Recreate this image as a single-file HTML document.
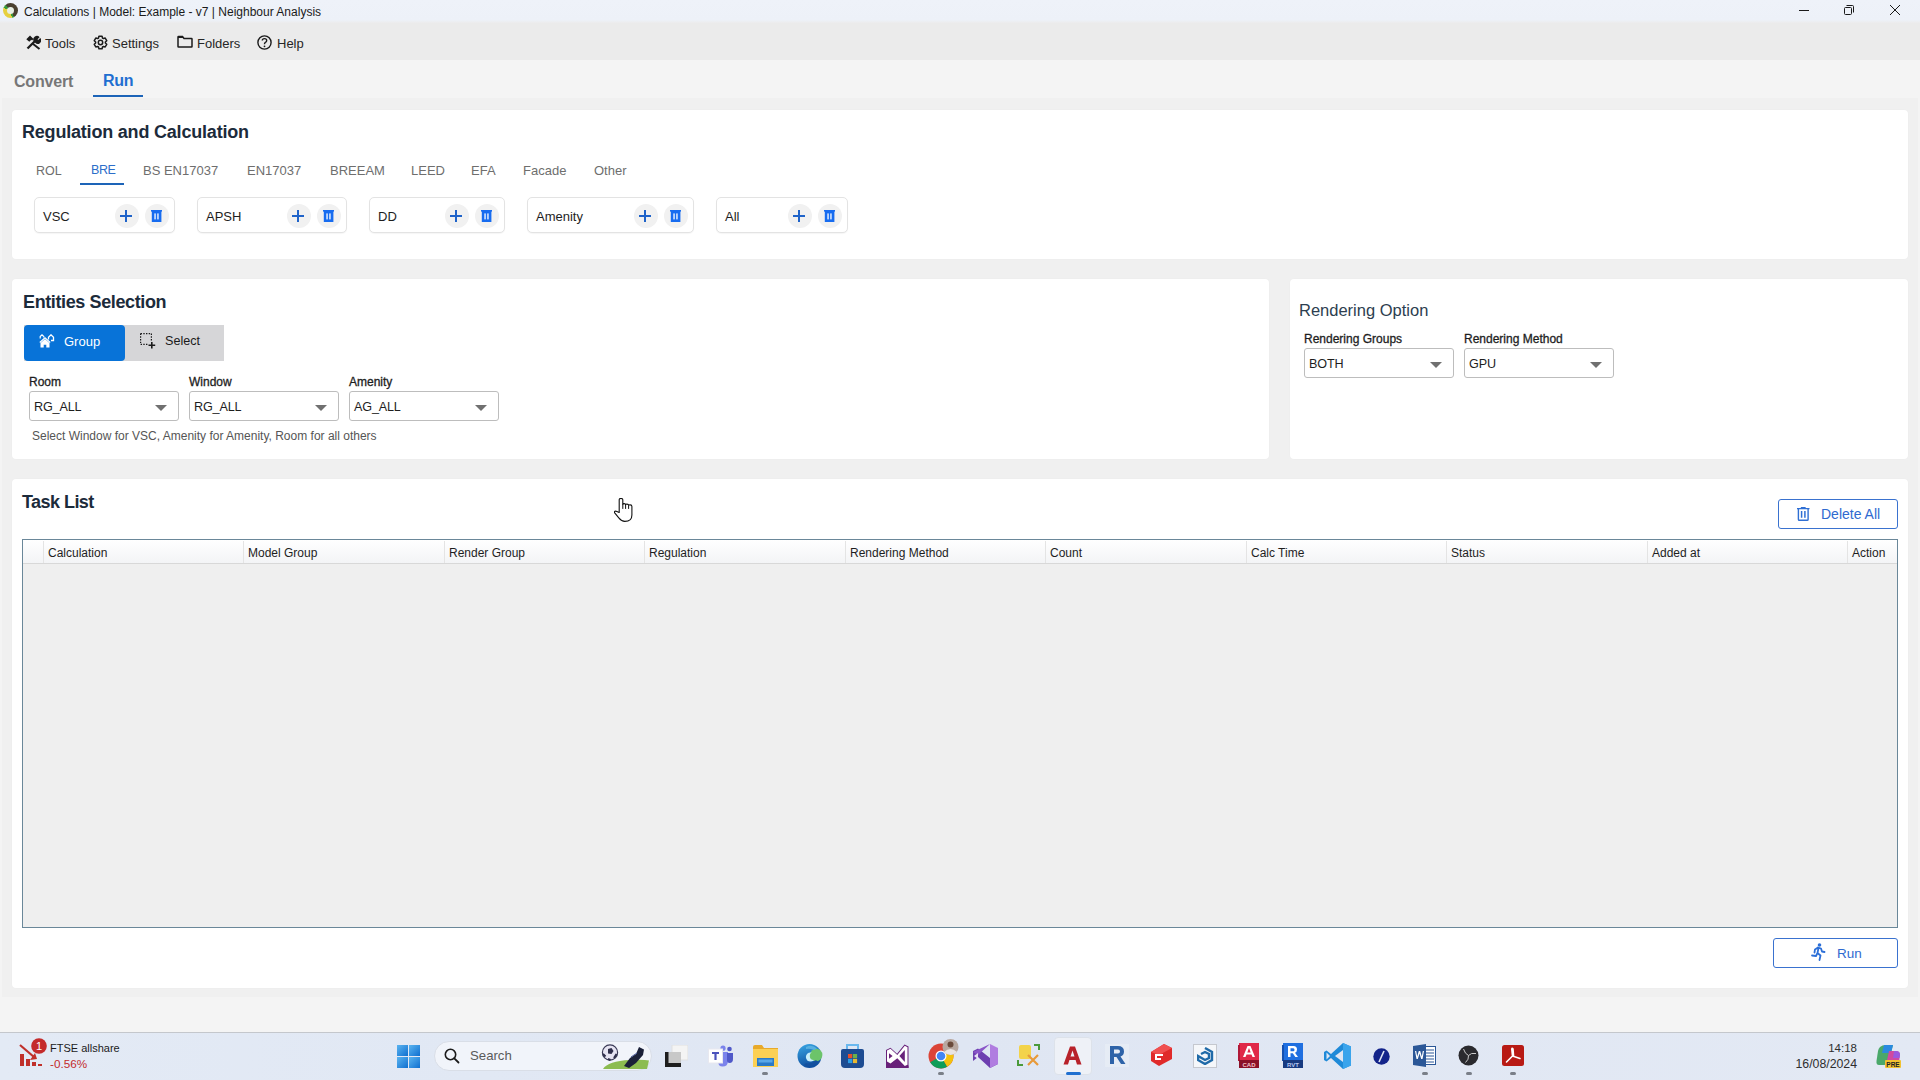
<!DOCTYPE html>
<html><head><meta charset="utf-8">
<style>
*{box-sizing:border-box;margin:0;padding:0}
html,body{width:1920px;height:1080px;overflow:hidden;background:#f4f4f4;font-family:"Liberation Sans",sans-serif;color:#1b1b1b}
.a{position:absolute}
.t{position:absolute;white-space:nowrap;line-height:1}
#title{left:0;top:0;width:1920px;height:23px;background:linear-gradient(#eef2f9 0,#edf1f8 20px,#ececec 23px)}
#menu{left:0;top:23px;width:1920px;height:37px;background:#ebebeb}
.card{position:absolute;background:#fff;border-radius:4px;box-shadow:0 0 2px rgba(0,0,0,0.03)}
.chip{position:absolute;top:197px;height:36px;border:1px solid #e3e3e3;border-radius:5px;background:#fff;box-shadow:0 1px 1px rgba(0,0,0,0.04)}
.chip .lbl{position:absolute;left:8px;top:12px;font-size:13px;color:#1e1e1e;line-height:1}
.cb{position:absolute;top:6px;width:24px;height:24px;border-radius:12px;background:#f1f1f1}
.dd{position:absolute;height:30px;border:1px solid #bdbdbd;border-radius:3px;background:#fff}
.dd .v{position:absolute;left:4px;top:9px;font-size:12.6px;letter-spacing:-0.15px;line-height:1;color:#1e1e1e}
.dd .ar{position:absolute;right:11px;top:13px;width:0;height:0;border-left:6px solid transparent;border-right:6px solid transparent;border-top:6px solid #707070}
.flbl{position:absolute;font-size:12px;line-height:1;color:#1e1e1e;-webkit-text-stroke:0.3px #1e1e1e}
.th{position:absolute;top:547px;font-size:12px;line-height:1;color:#1e1e1e}
.sep{position:absolute;top:541px;width:1px;height:22px;background:#e4e4e4}
</style></head><body>
<div id="title" class="a">
  <div class="a" style="left:2.5px;top:3.3px;width:15px;height:15px;border-radius:50%;background:conic-gradient(from -40deg,#4a4030 0deg 190deg,#3a9a3a 190deg 210deg,#e6d040 210deg 330deg,#3a9a3a 330deg 360deg)"></div><div class="a" style="left:6.5px;top:7.3px;width:7px;height:7px;border-radius:50%;background:#e8efe4"></div>
  <div class="t" style="left:24px;top:6px;font-size:12px;color:#1a1a1a">Calculations | Model: Example - v7 | Neighbour Analysis</div>
  <svg class="a" style="left:1798px;top:5px" width="12" height="12" viewBox="0 0 12 12"><path d="M1 5.5H11" stroke="#1a1a1a" stroke-width="1"/></svg>
  <svg class="a" style="left:1843px;top:4px" width="12" height="12" viewBox="0 0 12 12"><rect x="1.5" y="3.5" width="7" height="7" rx="1" fill="none" stroke="#1a1a1a" stroke-width="1"/><path d="M3.5 1.5H9.5Q10.5 1.5 10.5 2.5V8.5" fill="none" stroke="#1a1a1a" stroke-width="1"/></svg>
  <svg class="a" style="left:1889px;top:4px" width="12" height="12" viewBox="0 0 12 12"><path d="M1 1L11 11M11 1L1 11" stroke="#1a1a1a" stroke-width="1"/></svg>
</div>
<div id="menu" class="a">
  <svg class="a" style="left:26px;top:12px" width="15" height="15" viewBox="0 0 15 15"><path d="M1.5 13.5L9 6" stroke="#1b1b1b" stroke-width="2.3"/><path d="M8.2 6.8A3.2 3.2 0 0 1 13.6 2.2L11.5 4.2L12.2 5L14.2 3A3.2 3.2 0 0 1 9.2 7.8Z" fill="#1b1b1b"/><path d="M6.5 8.5L13.5 14" stroke="#1b1b1b" stroke-width="2"/><path d="M0.3 4.2L4 0.5L7.5 4L6 5.5L5.3 4.8L3.3 6.8Z" fill="#1b1b1b"/></svg>
  <div class="t" style="left:45px;top:14px;font-size:13px;color:#262626">Tools</div>
  <svg class="a" style="left:93px;top:12px" width="15" height="15" viewBox="0 0 15 15"><path fill="none" stroke="#1b1b1b" stroke-width="1.5" stroke-linejoin="round" d="M5.50 3.03 L5.95 1.19 L9.05 1.19 L9.50 3.03 L10.38 3.53 L12.20 3.01 L13.74 5.68 L12.37 6.99 L12.37 8.01 L13.74 9.32 L12.20 11.99 L10.38 11.47 L9.50 11.97 L9.05 13.81 L5.95 13.81 L5.50 11.97 L4.62 11.47 L2.80 11.99 L1.26 9.32 L2.63 8.01 L2.63 6.99 L1.26 5.68 L2.80 3.01 L4.62 3.53Z"/><circle cx="7.5" cy="7.5" r="2.2" fill="none" stroke="#1b1b1b" stroke-width="1.5"/></svg>
  <div class="t" style="left:112px;top:14px;font-size:13px;color:#262626">Settings</div>
  <svg class="a" style="left:177px;top:12px" width="16" height="13" viewBox="0 0 16 13"><path d="M1 2V11.5Q1 12 1.5 12H14.5Q15 12 15 11.5V4Q15 3.5 14.5 3.5H7L5.5 1.5H1.5Q1 1.5 1 2Z" fill="none" stroke="#1b1b1b" stroke-width="1.5"/><path d="M1 1.5H5.5L6.5 3H1Z" fill="#1b1b1b"/></svg>
  <div class="t" style="left:197px;top:14px;font-size:13px;color:#262626">Folders</div>
  <svg class="a" style="left:257px;top:12px" width="15" height="15" viewBox="0 0 15 15"><circle cx="7.5" cy="7.5" r="6.6" fill="none" stroke="#1b1b1b" stroke-width="1.4"/><path d="M5.3 5.6Q5.3 3.6 7.5 3.6Q9.7 3.6 9.7 5.5Q9.7 6.7 8.4 7.3Q7.5 7.8 7.5 9V9.3" fill="none" stroke="#1b1b1b" stroke-width="1.4"/><circle cx="7.5" cy="11.3" r="0.9" fill="#1b1b1b"/></svg>
  <div class="t" style="left:277px;top:14px;font-size:13px;color:#262626">Help</div>
</div>
<div class="t" style="left:14px;top:74px;font-size:16px;letter-spacing:-0.2px;font-weight:700;color:#777">Convert</div>
<div class="t" style="left:103px;top:73px;font-size:16px;letter-spacing:-0.3px;font-weight:700;color:#1f6fd1">Run</div>
<div class="a" style="left:93px;top:95px;width:50px;height:2px;background:#1d64b8"></div>

<div class="a" style="left:2px;top:98px;width:1916px;height:899px;background:#f0f0f0"></div>
<!-- Card 1 -->
<div class="card" style="left:12px;top:110px;width:1896px;height:149px"></div>
<div class="t" style="left:22px;top:122.7px;font-size:18px;letter-spacing:-0.2px;font-weight:700;color:#1c2b3b">Regulation and Calculation</div>
<div class="t" style="left:36px;top:164.8px;font-size:12.5px;color:#6e6e6e">ROL</div>
<div class="t" style="left:91px;top:164px;font-size:12.5px;letter-spacing:-0.4px;color:#2c6ec9">BRE</div>
<div class="a" style="left:80px;top:183px;width:44px;height:2px;background:#1d64b8"></div>
<div class="t" style="left:143px;top:164px;font-size:13px;color:#6e6e6e">BS EN17037</div>
<div class="t" style="left:247px;top:164px;font-size:13px;color:#6e6e6e">EN17037</div>
<div class="t" style="left:330px;top:164px;font-size:13px;color:#6e6e6e">BREEAM</div>
<div class="t" style="left:411px;top:164px;font-size:13px;color:#6e6e6e">LEED</div>
<div class="t" style="left:471px;top:164px;font-size:13px;color:#6e6e6e">EFA</div>
<div class="t" style="left:523px;top:164px;font-size:13px;color:#6e6e6e">Facade</div>
<div class="t" style="left:594px;top:164px;font-size:13px;color:#6e6e6e">Other</div>
<div class="chip" style="left:34px;width:141px">
<div class="lbl">VSC</div>
<div class="cb" style="left:79.5px"></div><div class="cb" style="left:109.5px"></div>
<svg class="a" style="left:84.5px;top:12px" width="12" height="12" viewBox="0 0 12 12"><path d="M0 6H12M6 0V12" stroke="#1f63c9" stroke-width="2"/></svg>
<svg class="a" style="left:116.0px;top:12px" width="11" height="13" viewBox="0 0 11 13"><rect x="0" y="0" width="11" height="1.6" fill="#176cf0"/><rect x="0.8" y="1" width="9.6" height="11" fill="#176cf0"/><rect x="3.4" y="3.4" width="1.3" height="6" fill="#fff"/><rect x="6.3" y="3.4" width="1.3" height="6" fill="#fff"/></svg>
</div><div class="chip" style="left:197px;width:150px">
<div class="lbl">APSH</div>
<div class="cb" style="left:88.5px"></div><div class="cb" style="left:118.5px"></div>
<svg class="a" style="left:93.5px;top:12px" width="12" height="12" viewBox="0 0 12 12"><path d="M0 6H12M6 0V12" stroke="#1f63c9" stroke-width="2"/></svg>
<svg class="a" style="left:125.0px;top:12px" width="11" height="13" viewBox="0 0 11 13"><rect x="0" y="0" width="11" height="1.6" fill="#176cf0"/><rect x="0.8" y="1" width="9.6" height="11" fill="#176cf0"/><rect x="3.4" y="3.4" width="1.3" height="6" fill="#fff"/><rect x="6.3" y="3.4" width="1.3" height="6" fill="#fff"/></svg>
</div><div class="chip" style="left:369px;width:136px">
<div class="lbl">DD</div>
<div class="cb" style="left:74.5px"></div><div class="cb" style="left:104.5px"></div>
<svg class="a" style="left:79.5px;top:12px" width="12" height="12" viewBox="0 0 12 12"><path d="M0 6H12M6 0V12" stroke="#1f63c9" stroke-width="2"/></svg>
<svg class="a" style="left:111.0px;top:12px" width="11" height="13" viewBox="0 0 11 13"><rect x="0" y="0" width="11" height="1.6" fill="#176cf0"/><rect x="0.8" y="1" width="9.6" height="11" fill="#176cf0"/><rect x="3.4" y="3.4" width="1.3" height="6" fill="#fff"/><rect x="6.3" y="3.4" width="1.3" height="6" fill="#fff"/></svg>
</div><div class="chip" style="left:527px;width:167px">
<div class="lbl">Amenity</div>
<div class="cb" style="left:105.5px"></div><div class="cb" style="left:135.5px"></div>
<svg class="a" style="left:110.5px;top:12px" width="12" height="12" viewBox="0 0 12 12"><path d="M0 6H12M6 0V12" stroke="#1f63c9" stroke-width="2"/></svg>
<svg class="a" style="left:142.0px;top:12px" width="11" height="13" viewBox="0 0 11 13"><rect x="0" y="0" width="11" height="1.6" fill="#176cf0"/><rect x="0.8" y="1" width="9.6" height="11" fill="#176cf0"/><rect x="3.4" y="3.4" width="1.3" height="6" fill="#fff"/><rect x="6.3" y="3.4" width="1.3" height="6" fill="#fff"/></svg>
</div><div class="chip" style="left:716px;width:132px">
<div class="lbl">All</div>
<div class="cb" style="left:70.5px"></div><div class="cb" style="left:100.5px"></div>
<svg class="a" style="left:75.5px;top:12px" width="12" height="12" viewBox="0 0 12 12"><path d="M0 6H12M6 0V12" stroke="#1f63c9" stroke-width="2"/></svg>
<svg class="a" style="left:107.0px;top:12px" width="11" height="13" viewBox="0 0 11 13"><rect x="0" y="0" width="11" height="1.6" fill="#176cf0"/><rect x="0.8" y="1" width="9.6" height="11" fill="#176cf0"/><rect x="3.4" y="3.4" width="1.3" height="6" fill="#fff"/><rect x="6.3" y="3.4" width="1.3" height="6" fill="#fff"/></svg>
</div>
<div class="card" style="left:12px;top:279px;width:1257px;height:180px"></div>
<div class="t" style="left:23px;top:292.7px;font-size:18px;letter-spacing:-0.38px;font-weight:700;color:#1c2b3b">Entities Selection</div>
<div class="a" style="left:24px;top:325px;width:200px;height:36px;background:#d6d6d8"></div>
<div class="a" style="left:24px;top:325px;width:101px;height:36px;background:#0873d8;border-radius:4px"></div>
<svg class="a" style="left:39px;top:334px" width="16" height="14" viewBox="0 0 16 14"><path d="M1.5 13.5V9L6 5L10.5 9V13.5H7.3V10.8H4.7V13.5Z" fill="#fff"/><path d="M0.8 8.5L6 3.8L11.2 8.5" fill="none" stroke="#fff" stroke-width="1.3"/><path d="M1.2 4.5V2.6L3 0.9L4.8 2.6V3.6" fill="none" stroke="#fff" stroke-width="1.2"/><path d="M9.5 5.5V3.2L12 0.8L14.5 3.2V6.5H12" fill="none" stroke="#fff" stroke-width="1.3"/></svg>
<div class="t" style="left:64px;top:335px;font-size:13px;color:#fff">Group</div>
<svg class="a" style="left:140px;top:333px" width="16" height="16" viewBox="0 0 16 16"><path d="M0.6 0.6H11.4M0.6 0.6V11.4M11.4 0.6V8.5M0.6 11.4H8.5" fill="none" stroke="#1a1a1a" stroke-width="1.2" stroke-dasharray="1.4 1.3"/><path d="M11.8 9V15.5M8.5 12.2H15.2" stroke="#1a1a1a" stroke-width="1.6"/></svg>
<div class="t" style="left:165px;top:335px;font-size:12.6px;color:#1a1a1a">Select</div>
<div class="flbl" style="left:29px;top:376px">Room</div>
<div class="flbl" style="left:189px;top:376px">Window</div>
<div class="flbl" style="left:349px;top:376px">Amenity</div>
<div class="dd" style="left:29px;top:391px;width:150px"><div class="v">RG_ALL</div><div class="ar"></div></div><div class="dd" style="left:189px;top:391px;width:150px"><div class="v">RG_ALL</div><div class="ar"></div></div><div class="dd" style="left:349px;top:391px;width:150px"><div class="v">AG_ALL</div><div class="ar"></div></div>
<div class="t" style="left:32px;top:430px;font-size:12px;color:#555">Select Window for VSC, Amenity for Amenity, Room for all others</div>

<div class="card" style="left:1290px;top:279px;width:618px;height:180px"></div>
<div class="t" style="left:1299px;top:302px;font-size:16.5px;color:#2d3e50">Rendering Option</div>
<div class="flbl" style="left:1304px;top:333px">Rendering Groups</div>
<div class="flbl" style="left:1464px;top:333px">Rendering Method</div>
<div class="dd" style="left:1304px;top:348px;width:150px"><div class="v">BOTH</div><div class="ar"></div></div><div class="dd" style="left:1464px;top:348px;width:150px"><div class="v">GPU</div><div class="ar"></div></div>

<div class="card" style="left:12px;top:479px;width:1896px;height:509px"></div>
<div class="t" style="left:22px;top:492.7px;font-size:18px;letter-spacing:-0.55px;font-weight:700;color:#1c2b3b">Task List</div>
<div class="a" style="left:1778px;top:499px;width:120px;height:30px;border:1px solid #3a72cf;border-radius:3px"></div>
<svg class="a" style="left:1797px;top:507px" width="13" height="14" viewBox="0 0 13 14"><path d="M0 1.6H12.5M4.5 1V0.4H8V1" fill="none" stroke="#2f6fd4" stroke-width="1.3"/><path d="M1.4 1.6V12.4Q1.4 13.3 2.3 13.3H10.2Q11.1 13.3 11.1 12.4V1.6" fill="none" stroke="#2f6fd4" stroke-width="1.4"/><path d="M4.6 4V10.8M7.9 4V10.8" stroke="#2f6fd4" stroke-width="1.5"/></svg>
<div class="t" style="left:1821px;top:507px;font-size:14px;color:#2f6ad0">Delete All</div>
<div class="a" style="left:22px;top:539px;width:1876px;height:389px;border:1px solid #6a8799;background:#efefef"></div>
<div class="a" style="left:23px;top:540px;width:1874px;height:24px;background:linear-gradient(#ffffff,#f3f4f6);border-bottom:1px solid #d8d8d8"></div>
<div class="sep" style="left:43px"></div><div class="th" style="left:48px">Calculation</div><div class="sep" style="left:243px"></div><div class="th" style="left:248px">Model Group</div><div class="sep" style="left:444px"></div><div class="th" style="left:449px">Render Group</div><div class="sep" style="left:644px"></div><div class="th" style="left:649px">Regulation</div><div class="sep" style="left:845px"></div><div class="th" style="left:850px">Rendering Method</div><div class="sep" style="left:1045px"></div><div class="th" style="left:1050px">Count</div><div class="sep" style="left:1246px"></div><div class="th" style="left:1251px">Calc Time</div><div class="sep" style="left:1446px"></div><div class="th" style="left:1451px">Status</div><div class="sep" style="left:1647px"></div><div class="th" style="left:1652px">Added at</div><div class="sep" style="left:1847px"></div><div class="th" style="left:1852px">Action</div>
<div class="a" style="left:1773px;top:938px;width:125px;height:30px;border:1px solid #3a72cf;border-radius:3px"></div>
<svg class="a" style="left:1811px;top:943px" width="15" height="18" viewBox="0 0 15 18"><circle cx="8.5" cy="2" r="1.8" fill="#2c6fd8"/><path d="M7 4.5L4 6.5L3.5 9.5M7 4.5L10 5.5L11 8.5L13.5 9M7.5 5L6.5 10L9.5 12.5L8.5 17M6.5 10L5 13L1 12.5" fill="none" stroke="#2c6fd8" stroke-width="1.8" stroke-linecap="round" stroke-linejoin="round"/></svg>
<div class="t" style="left:1837px;top:947px;font-size:13.5px;color:#2f6ad0">Run</div>
<svg class="a" style="left:614px;top:498px" width="20" height="25" viewBox="0 0 20 25"><path d="M5.2 14.5V1.8Q5.2 0.4 7 0.4Q8.8 0.4 8.8 1.8V6.4Q8.8 5.6 10.2 5.6Q11.6 5.6 11.6 6.8Q11.6 6.1 13.1 6.1Q14.6 6.1 14.6 7.3Q14.6 6.9 16.2 6.9Q17.9 6.9 17.9 8.6V17Q17.9 23.4 10.8 23.4Q7.5 23.4 5 20.2L0.7 14.9Q0.1 13.9 1 13.3Q1.9 12.8 2.9 13.6Z" fill="#fff" stroke="#111" stroke-width="1.1" stroke-linejoin="round"/><path d="M8.8 6.4V10.9M11.6 6.8V10.9M14.6 7.3V10.9" stroke="#111" stroke-width="1"/></svg>
<div class="a" style="left:0;top:1032px;width:1920px;height:48px;background:linear-gradient(90deg,#e3eaf5,#dfe6f3 50%,#e3e9f4);border-top:1px solid #c4c7cc"></div>
<!-- FTSE widget -->
<svg class="a" style="left:18px;top:1037px" width="30" height="32" viewBox="0 0 30 32"><rect x="2" y="17" width="4" height="12" fill="#c0302a"/><rect x="8" y="22" width="4" height="7" fill="#c0302a"/><rect x="14" y="25" width="4" height="4" fill="#c0302a"/><rect x="20" y="27" width="4" height="2" fill="#c0302a"/><path d="M2 8L16 20" stroke="#c0302a" stroke-width="2.2"/><path d="M12 23L19 22L17 16Z" fill="#c0302a"/><circle cx="21" cy="9" r="7.8" fill="#c42b2b"/><text x="21" y="13" font-family="Liberation Sans" font-size="11" fill="#fff" text-anchor="middle">1</text></svg>
<div class="t" style="left:50px;top:1043px;font-size:11px;color:#1b1b1b">FTSE allshare</div>
<div class="t" style="left:50px;top:1058px;font-size:11.7px;color:#c42b2b">-0.56%</div>
<!-- windows -->
<svg class="a" style="left:397px;top:1045px" width="23" height="23" viewBox="0 0 23 23"><defs><linearGradient id="wg" x1="0" y1="0" x2="1" y2="1"><stop offset="0" stop-color="#5ab4f0"/><stop offset="1" stop-color="#0f6fd0"/></linearGradient></defs><rect x="0" y="0" width="11" height="11" fill="url(#wg)"/><rect x="12" y="0" width="11" height="11" fill="url(#wg)"/><rect x="0" y="12" width="11" height="11" fill="url(#wg)"/><rect x="12" y="12" width="11" height="11" fill="url(#wg)"/></svg>
<!-- search -->
<div class="a" style="left:434px;top:1041px;width:218px;height:30px;border-radius:15px;background:#f1f4fa;border:1px solid #d9dee7"></div>
<svg class="a" style="left:444px;top:1048px" width="16" height="16" viewBox="0 0 16 16"><circle cx="6.5" cy="6.5" r="5.2" fill="none" stroke="#1b1b1b" stroke-width="1.6"/><path d="M10.3 10.3L14.5 14.5" stroke="#1b1b1b" stroke-width="1.8" stroke-linecap="round"/></svg>
<div class="t" style="left:470px;top:1049px;font-size:13.2px;color:#5a5a5a">Search</div>
<svg class="a" style="left:600px;top:1044px" width="50" height="26" viewBox="0 0 50 26"><path d="M3 25Q8 17 30 16Q44 15.5 49 16.5L47 25Z" fill="#8cbc50"/><circle cx="10" cy="8.5" r="7.6" fill="#e6e4f2" stroke="#3a3a56" stroke-width="1.2"/><path d="M8 5L11.5 4L13.5 7L11.5 10L8 9.5Z" fill="#2e2e4a"/><path d="M3 10L5.5 12.5M16.5 10L14 14M8 15L10.5 16" stroke="#2e2e4a" stroke-width="2"/><path d="M24 22L30 14L36 10L39 3L44 5.5L43 11L36 19L29 24Z" fill="#1a2038"/><path d="M31 13L37 9" stroke="#4a5a9a" stroke-width="1"/></svg>
<!-- task view -->
<svg class="a" style="left:665px;top:1045px" width="23" height="22" viewBox="0 0 23 22"><rect x="7" y="0" width="16" height="15" fill="#f4f4f4" stroke="#e0e0e0"/><rect x="0" y="7" width="16" height="15" fill="#1e1e1e"/><rect x="3.5" y="7" width="12.5" height="11" fill="#c8c8c8"/></svg>
<!-- teams -->
<svg class="a" style="left:708px;top:1045px" width="26" height="22" viewBox="0 0 26 22"><circle cx="15" cy="3.2" r="2.6" fill="#7b83eb"/><circle cx="21.5" cy="4" r="2.3" fill="#5059c9"/><path d="M10 7H20V16Q20 21.5 14.5 21.5Q10 21.5 10 16Z" fill="#7b83eb"/><path d="M19 8H25V14Q25 18 21.5 18Q19 18 19 15Z" fill="#5059c9"/><rect x="0.5" y="4" width="14" height="14" fill="#fff" stroke="#e8e8ef"/><path d="M4 8H11M7.5 8V15" stroke="#4b53bc" stroke-width="2.2"/></svg>
<!-- folder -->
<svg class="a" style="left:753px;top:1045px" width="25" height="22" viewBox="0 0 25 22"><path d="M0 2Q0 0 2 0H9L11 3H25V21H0Z" fill="#e8a92a"/><rect x="0" y="4" width="25" height="18" fill="#fcd054"/><rect x="4" y="13" width="17" height="8" fill="#2a7ac8"/><rect x="5.5" y="14.5" width="14" height="3" fill="#5aa8e8"/></svg>
<div class="a" style="left:762px;top:1072px;width:6px;height:3px;border-radius:2px;background:#7a7f88"></div>
<!-- edge -->
<svg class="a" style="left:797px;top:1044px" width="26" height="24" viewBox="0 0 26 24"><defs><linearGradient id="eg" x1="0" y1="0" x2="0.3" y2="1"><stop offset="0" stop-color="#39a8e6"/><stop offset="1" stop-color="#0f4fa0"/></linearGradient></defs><circle cx="12.5" cy="12" r="12" fill="url(#eg)"/><circle cx="19.2" cy="11" r="6.2" fill="#6cc46a"/><path d="M9 3Q15 0 20 4.5L17 6Q12 4 9 5Z" fill="#58b0e0"/><circle cx="13.5" cy="13" r="4.6" fill="#c9eefa"/><circle cx="16.8" cy="12" r="4" fill="#6cc46a"/><path d="M7 21Q14 25 21 18L19 16Q14 21 9 19Z" fill="#14509e"/></svg>
<!-- store -->
<svg class="a" style="left:841px;top:1044px" width="23" height="24" viewBox="0 0 23 24"><rect x="6" y="1" width="11" height="5" fill="none" stroke="#6ab8ee" stroke-width="2"/><path d="M0 7Q0 5 2 5H21Q23 5 23 7V20Q23 24 19 24H4Q0 24 0 20Z" fill="#1d4c92"/><rect x="7" y="10" width="4.2" height="4.2" fill="#e8502a"/><rect x="11.9" y="10" width="4.2" height="4.2" fill="#6ab04a"/><rect x="7" y="14.9" width="4.2" height="4.2" fill="#2a9ee8"/><rect x="11.9" y="14.9" width="4.2" height="4.2" fill="#e8b830"/></svg>
<!-- VS -->
<svg class="a" style="left:886px;top:1044px" width="23" height="24" viewBox="0 0 23 24"><path d="M0 6L4.5 3.8L11 9.8L18.5 0.5L22.5 2.5V24H0Z" fill="#68217a"/><path d="M1 6.6L4.5 4.8L11.3 11L18.8 1.8L21.5 3.2V20.8L18.8 22L11.3 14.2L4.5 19.5L1 17.5Z" fill="#fff"/><path d="M3 9.2V14.8L6.6 12Z" fill="#68217a"/><path d="M18.8 6V18L13.4 12Z" fill="#68217a"/><path d="M0 24V17.8L4.5 20.3L11.3 15L18.8 23L22.5 21.5V24Z" fill="#68217a"/></svg>
<!-- chrome -->
<svg class="a" style="left:928px;top:1038px" width="31" height="31" viewBox="0 0 31 31"><circle cx="13" cy="18" r="12.5" fill="#db4437"/><path d="M13 18L2.2 24.2A12.5 12.5 0 0 0 19.2 28.8Z" fill="#0f9d58"/><path d="M13 18L24.8 13.5A12.5 12.5 0 0 1 19.2 28.8Z" fill="#f4c20d"/><circle cx="13" cy="18" r="5.5" fill="#fff"/><circle cx="13" cy="18" r="4.3" fill="#4285f4"/><circle cx="22.5" cy="9" r="8" fill="#b8a8a0"/><circle cx="22.5" cy="6.5" r="3" fill="#6a4a3a"/><path d="M16 14Q22.5 8 29 14Q26 17 22.5 17Q19 17 16 14Z" fill="#e9e4e2"/></svg>
<div class="a" style="left:938px;top:1072px;width:6px;height:3px;border-radius:2px;background:#7a7f88"></div>
<!-- VS purple -->
<svg class="a" style="left:973px;top:1044px" width="25" height="24" viewBox="0 0 25 24"><path d="M0 7L5 4.5L17 14L25 10V20L17 24L5 13L0 17Z" fill="#6d3fb0"/><path d="M17 0L25 4V20L17 24Z" fill="#b07de0"/><path d="M17 0L5 11L0 8L17 0Z" fill="#8a55c8"/><path d="M5 9V15L1 12Z" fill="#e8e0f4"/></svg>
<!-- tools (yellow) -->
<svg class="a" style="left:1017px;top:1044px" width="24" height="23" viewBox="0 0 24 23"><rect x="2" y="1" width="12" height="14" rx="2" fill="#f3d34a"/><path d="M17 1H22V6" fill="none" stroke="#4a9a3a" stroke-width="2"/><path d="M1 16V21H6" fill="none" stroke="#4a9a3a" stroke-width="2"/><path d="M11 21L21 11M11 11L21 21" stroke="#e89a3a" stroke-width="2.2"/></svg>
<!-- autocad active -->
<div class="a" style="left:1054px;top:1037px;width:38px;height:38px;border-radius:4px;background:#eef1f7;border:1px solid #dde2ea"></div>
<svg class="a" style="left:1063px;top:1046px" width="19" height="19" viewBox="0 0 19 19"><path d="M0.5 18.5L7 0.5H12L18.5 18.5H14L12.6 14H6.4L5 18.5Z M7.5 10.5H11.5L9.5 4.5Z" fill="#b8222a" fill-rule="evenodd"/></svg>
<div class="a" style="left:1066px;top:1072px;width:15px;height:3px;border-radius:2px;background:#1f6fd0"></div>
<!-- revit R -->
<div class="a" style="left:1105px;top:1044px;width:24px;height:23px;background:#e6ecf5"></div>
<svg class="a" style="left:1109px;top:1046px" width="17" height="18" viewBox="0 0 17 18"><path d="M1 18V0H9Q15 0 15 5.5Q15 9.5 11.5 10.5L16.5 18H12L7.5 11H5V18Z M5 3.5V7.5H9Q11 7.5 11 5.5Q11 3.5 9 3.5Z" fill="#2e63a8" fill-rule="evenodd"/></svg>
<!-- sketchup red -->
<svg class="a" style="left:1151px;top:1044px" width="21" height="22" viewBox="0 0 21 22"><path d="M0 8L13 0L21 4V15L8 22L0 17Z" fill="#e02a2a"/><path d="M13 0L21 4L8 11L0 8Z" fill="#f05050"/><path d="M4 10H12V12H6V14H10V16H4Z" fill="#fff"/></svg>
<!-- sketchup blue -->
<div class="a" style="left:1193px;top:1044px;width:24px;height:24px;background:#f5f7fa;border:1px solid #c5c8cf"></div>
<svg class="a" style="left:1197px;top:1047px" width="17" height="18" viewBox="0 0 17 18"><path d="M8 1L15 5V13L8 17L1 13V9L8 13L12 11V7L8 5L4 7" fill="none" stroke="#1f6aa8" stroke-width="2.4"/></svg>
<!-- autocad CAD -->
<svg class="a" style="left:1238px;top:1043px" width="22" height="25" viewBox="0 0 22 25"><rect x="1" y="0" width="20" height="18" fill="#e02848"/><rect x="0" y="2" width="2" height="16" fill="#b01838"/><rect x="1" y="17" width="20" height="8" fill="#8a1028"/><path d="M5 14L9.5 3H12.5L17 14H14.5L13.5 11.5H8.5L7.5 14Z M9.3 9.5H12.7L11 5Z" fill="#fff" fill-rule="evenodd"/><text x="11" y="23.5" font-family="Liberation Sans" font-size="6" font-weight="700" fill="#f4c0c8" text-anchor="middle">CAD</text></svg>
<!-- revit RVT -->
<svg class="a" style="left:1282px;top:1043px" width="22" height="25" viewBox="0 0 22 25"><rect x="1" y="0" width="20" height="18" fill="#1f6fe0"/><rect x="0" y="2" width="2" height="16" fill="#1450b0"/><rect x="1" y="17" width="20" height="8" fill="#173a80"/><path d="M6 14V3H11.5Q15 3 15 6.5Q15 9 13 9.8L16 14H13.3L10.8 10.2H8.5V14Z M8.5 5.2V8.2H11.3Q12.5 8.2 12.5 6.7Q12.5 5.2 11.3 5.2Z" fill="#fff" fill-rule="evenodd"/><text x="11" y="23.5" font-family="Liberation Sans" font-size="6" font-weight="700" fill="#b8c8f0" text-anchor="middle">RVT</text></svg>
<!-- vscode -->
<svg class="a" style="left:1324px;top:1043px" width="27" height="26" viewBox="0 0 27 26"><path d="M19 0L27 3.5V22.5L19 26L7 15L2.5 18.5L0 17V9L2.5 7.5L7 11Z" fill="#1f8ad8"/><path d="M19 0L27 3.5V22.5L19 26Z" fill="#3aa4ec"/><path d="M19 7V19L11 13Z" fill="#dfe6f3"/><path d="M2.5 9.5V16.5L6 13Z" fill="#dfe6f3"/></svg>
<!-- dark blue circle -->
<svg class="a" style="left:1373px;top:1048px" width="17" height="17" viewBox="0 0 17 17"><circle cx="8.5" cy="8.5" r="8.2" fill="#13248a"/><path d="M6 14L11 3" stroke="#dfe6f3" stroke-width="1.6"/></svg>
<!-- word -->
<svg class="a" style="left:1413px;top:1044px" width="23" height="23" viewBox="0 0 23 23"><rect x="9" y="2.5" width="13.5" height="18" fill="#fff" stroke="#2b5797" stroke-width="1"/><path d="M12 6H21M12 9H21M12 12H21M12 15H21M12 18H21" stroke="#2b5797" stroke-width="1"/><path d="M0 2L13 0V23L0 21Z" fill="#2b5797"/><path d="M2 7L3.5 15H4.8L6.5 9.5L8.2 15H9.5L11 7H9.8L8.8 12.5L7.2 7H5.8L4.2 12.5L3.2 7Z" fill="#fff"/></svg>
<div class="a" style="left:1422px;top:1072px;width:6px;height:3px;border-radius:2px;background:#7a7f88"></div>
<!-- obs -->
<svg class="a" style="left:1458px;top:1045px" width="21" height="21" viewBox="0 0 21 21"><circle cx="10.5" cy="10.5" r="10" fill="#2a2a2e"/><path d="M10.5 10.5Q7 9 5.5 4M10.5 10.5Q13 7.5 18 8.5M10.5 10.5Q11 14.5 7.5 17.5" fill="none" stroke="#c8c8c8" stroke-width="1"/></svg>
<div class="a" style="left:1466px;top:1072px;width:6px;height:3px;border-radius:2px;background:#7a7f88"></div>
<!-- acrobat -->
<svg class="a" style="left:1502px;top:1045px" width="22" height="21" viewBox="0 0 22 21"><rect x="0" y="0" width="22" height="21" rx="2.5" fill="#b81a14"/><path d="M10.5 11L9.8 4Q10 2.5 11 4L11.5 10.5M10.5 11L4.5 17M10.5 11L18 13.5" fill="none" stroke="#fff" stroke-width="1.6" stroke-linecap="round"/></svg>
<div class="a" style="left:1510px;top:1072px;width:6px;height:3px;border-radius:2px;background:#7a7f88"></div>
<!-- clock -->
<div class="t" style="right:63px;top:1042.5px;font-size:11.5px;color:#2e2e2e">14:18</div>
<div class="t" style="right:63px;top:1058px;font-size:12.3px;color:#2e2e2e">16/08/2024</div>
<!-- copilot -->
<svg class="a" style="left:1876px;top:1045px" width="26" height="23" viewBox="0 0 26 23"><path d="M4 2Q6 0 10 0H17L13 16Q12 20 8 20H3Q0 20 0.5 16L2 6Q2.5 3.5 4 2Z" fill="#4aa86a"/><path d="M8 0H17L15 8H6Z" fill="#2a8ae0"/><path d="M13 6H20Q24 6 24 10L23 17Q22 20 18 20H10Z" fill="#d04aa0"/><path d="M18 6H20Q24 6 24 10L23.5 13H17Z" fill="#9a5ae0"/><rect x="9" y="15" width="16" height="8" rx="1" fill="#f2c230"/><text x="17" y="21.5" font-family="Liberation Sans" font-size="6.5" font-weight="700" fill="#222" text-anchor="middle">PRE</text></svg>

</body></html>
